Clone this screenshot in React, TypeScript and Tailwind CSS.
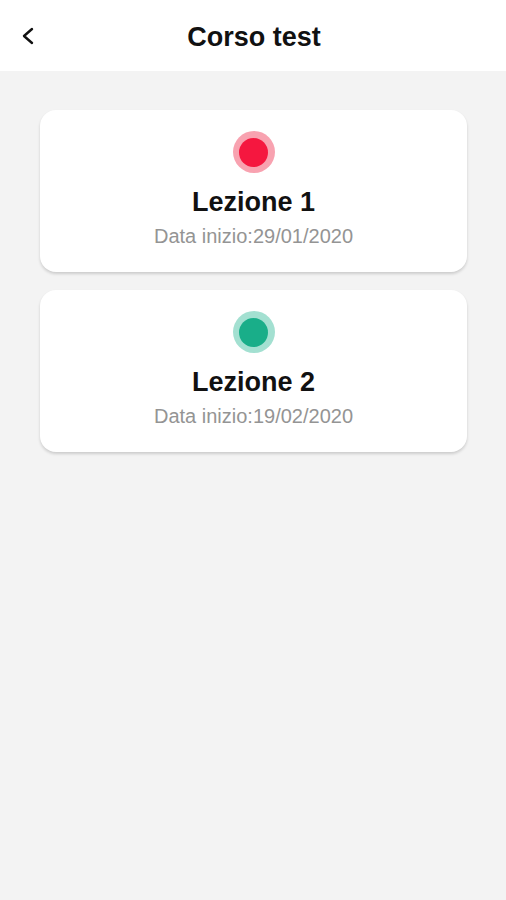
import React from "react";

const lessons = [
  { title: "Lezione 1", date: "29/01/2020", inner: "bg-[#f5173f]", ring: "bg-[#f8a2b0]" },
  { title: "Lezione 2", date: "19/02/2020", inner: "bg-[#19ae89]", ring: "bg-[#a3e0d1]" },
];

export default function App() {
  return (
    <div className="w-[506px] h-[900px] bg-[#f3f3f3] flex flex-col" style={{ fontFamily: '"Liberation Sans", Arial, sans-serif' }}>
      <div className="relative h-[71px] bg-white flex items-center justify-center shrink-0">
        <svg className="absolute left-[20px] top-[26px]" width="16" height="20" viewBox="0 0 16 20" fill="none">
          <polyline points="12,3 4,10 12,17" stroke="#111" strokeWidth="2.4" strokeLinecap="round" strokeLinejoin="round" />
        </svg>
        <div className="text-[27px] leading-[31px] font-bold text-[#111] pl-[2px] pt-[3px]">Corso test</div>
      </div>
      <div className="flex flex-col gap-[18px] pt-[39px] pl-[40px] pr-[39px]">
        {lessons.map((l) => (
          <div key={l.title} className="bg-white rounded-[16px] h-[162px] flex flex-col items-center pt-[21px] shadow-[0_2px_3px_rgba(0,0,0,0.16)]">
            <div className={`w-[42px] h-[42px] rounded-full ${l.ring} flex items-center justify-center`}>
              <div className={`w-[29px] h-[29px] rounded-full ${l.inner}`} />
            </div>
            <div className="mt-[14px] text-[27px] leading-[31px] font-bold text-[#111]">{l.title}</div>
            <div className="mt-[6px] text-[20px] leading-[24px] text-[#949494]">Data inizio:{l.date}</div>
          </div>
        ))}
      </div>
    </div>
  );
}
